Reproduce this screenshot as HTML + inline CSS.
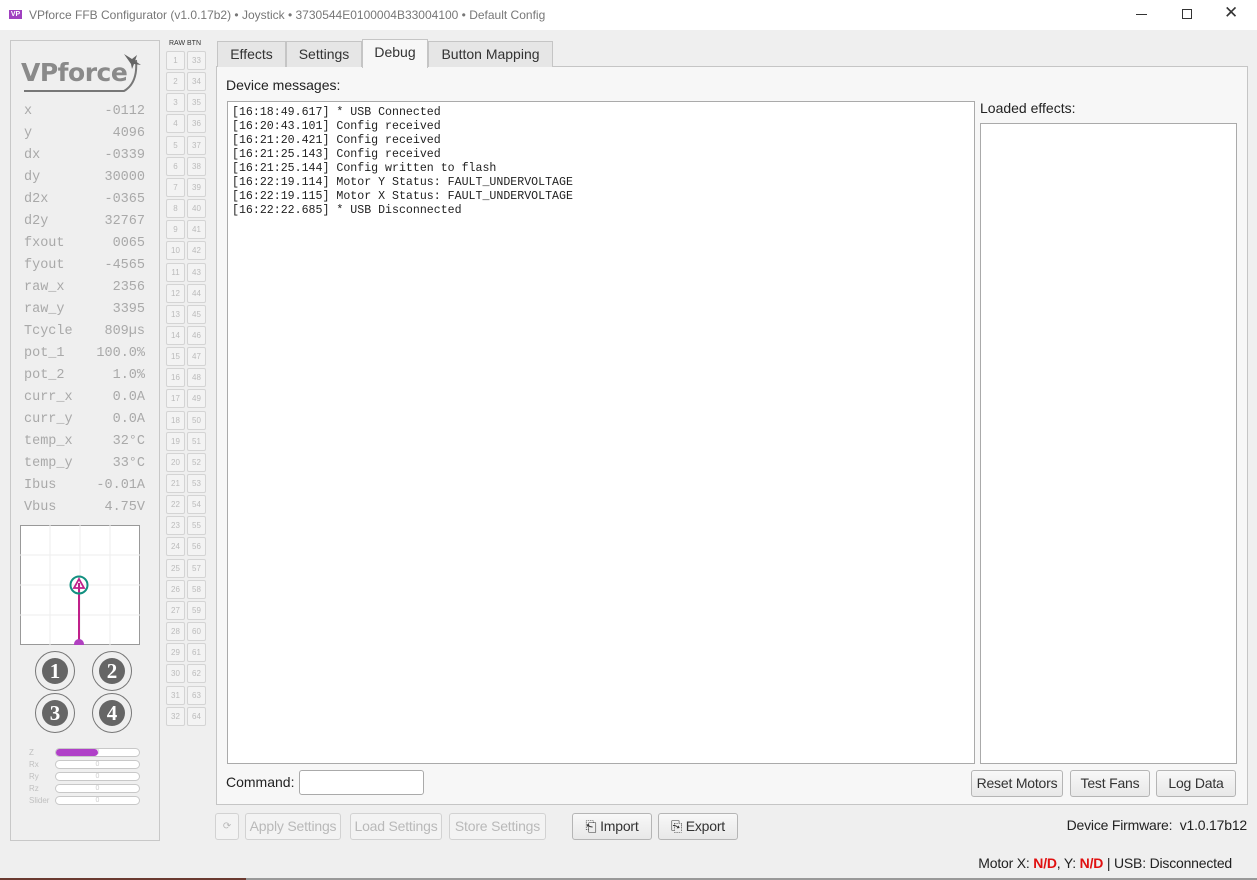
<!DOCTYPE html>
<html><head><meta charset="utf-8"><style>
*{box-sizing:border-box;margin:0;padding:0}
body{width:1257px;height:880px;background:#efefef;font-family:"Liberation Sans",sans-serif;position:relative;overflow:hidden;color:#222}
.abs{position:absolute}
.title{left:0;top:0;width:1257px;height:30px;background:#fff;font-size:12px;color:#777}
.lp{left:10px;top:40px;width:150px;height:801px;border:1px solid #c8c8c8;background:#efefef}
.v{font-family:"Liberation Mono",monospace;font-size:13.5px;color:#a9a9a9;position:absolute;left:24px;width:121px;height:22px}
.v span{float:right}
.b{position:absolute;width:19px;height:19px;border:1px solid #d4d4d4;border-radius:2px;background:#f3f3f3;font-size:8px;color:#bbb;text-align:center;line-height:18px}
.tab{position:absolute;top:41px;height:26px;border:1px solid #c5c5c5;border-bottom:none;background:#e6e6e6;font-size:14px;text-align:center;line-height:25px;color:#333}
.btn{position:absolute;height:27px;border:1px solid #b5b5b5;border-radius:3px;background:linear-gradient(#f8f8f8,#e8e8e8);font-size:14px;text-align:center;line-height:25px;color:#333;letter-spacing:-0.2px}
.dis{color:#b9b9b9;border-color:#d2d2d2;background:#f3f3f3}
.bar{position:absolute;left:55px;width:85px;height:9px;border:1px solid #c8c8c8;border-radius:5px;background:#fff;font-size:7px;color:#ccc;text-align:center;line-height:7px}
.bl{position:absolute;left:29px;font-size:8px;color:#c0c0c0}
.circ{position:absolute;width:40px;height:40px;border:1px solid #777;border-radius:50%}
.circ div{position:absolute;left:6px;top:6px;width:26px;height:26px;border-radius:50%;background:#666;color:#fff;font-weight:bold;font-family:"Liberation Serif",serif;font-size:21px;text-align:center;line-height:26px}
</style></head><body>
<div class="abs title">
 <div class="abs" style="left:9px;top:10px;width:13px;height:9px;background:#a040c0;color:#fff;font-size:7px;line-height:9px;text-align:center;font-weight:bold">VP</div>
 <div class="abs" style="left:29px;top:8px">VPforce FFB Configurator (v1.0.17b2) • Joystick • 3730544E0100004B33004100 • Default Config</div>
 <div class="abs" style="left:1136px;top:14px;width:11px;height:1px;background:#333"></div>
 <div class="abs" style="left:1182px;top:9px;width:10px;height:10px;border:1px solid #333"></div>
 <div class="abs" style="left:1224px;top:3px;font-size:17px;color:#333">✕</div>
</div>
<div class="abs lp"></div>
<div class="abs" style="left:21px;top:58px;font-size:25px;font-weight:bold;color:#8a8a8a;letter-spacing:-0.5px;font-family:'DejaVu Sans',sans-serif">VPforce</div>
<svg class="abs" style="left:20px;top:48px" width="122" height="48"><path d="M4 43 L104 43 Q118 35 116 12" fill="none" stroke="#777" stroke-width="2"/><path d="M104 6 l8 5 l5 -4 l-2 6 l6 4 l-7 -1 l-2 5 l-1 -5 z" fill="#666"/></svg>
<div class="v" style="top:104px">x<span>-0112</span></div>
<div class="v" style="top:126px">y<span>4096</span></div>
<div class="v" style="top:148px">dx<span>-0339</span></div>
<div class="v" style="top:170px">dy<span>30000</span></div>
<div class="v" style="top:192px">d2x<span>-0365</span></div>
<div class="v" style="top:214px">d2y<span>32767</span></div>
<div class="v" style="top:236px">fxout<span>0065</span></div>
<div class="v" style="top:258px">fyout<span>-4565</span></div>
<div class="v" style="top:280px">raw_x<span>2356</span></div>
<div class="v" style="top:302px">raw_y<span>3395</span></div>
<div class="v" style="top:324px">Tcycle<span>809µs</span></div>
<div class="v" style="top:346px">pot_1<span>100.0%</span></div>
<div class="v" style="top:368px">pot_2<span>1.0%</span></div>
<div class="v" style="top:390px">curr_x<span>0.0A</span></div>
<div class="v" style="top:412px">curr_y<span>0.0A</span></div>
<div class="v" style="top:434px">temp_x<span>32°C</span></div>
<div class="v" style="top:456px">temp_y<span>33°C</span></div>
<div class="v" style="top:478px">Ibus<span>-0.01A</span></div>
<div class="v" style="top:500px">Vbus<span>4.75V</span></div>
<svg class="abs" style="left:20px;top:525px" width="120" height="120"><rect x="0.5" y="0.5" width="119" height="119" fill="#fff" stroke="#999"/><g stroke="#eee"><line x1="30" y1="0" x2="30" y2="120"/><line x1="60" y1="0" x2="60" y2="120"/><line x1="90" y1="0" x2="90" y2="120"/><line x1="0" y1="30" x2="120" y2="30"/><line x1="0" y1="60" x2="120" y2="60"/><line x1="0" y1="90" x2="120" y2="90"/></g><line x1="59" y1="120" x2="59" y2="58" stroke="#c0208a" stroke-width="2"/><circle cx="59" cy="119" r="5" fill="#b040c0"/><circle cx="59" cy="60" r="8.5" fill="none" stroke="#129080" stroke-width="2"/><path d="M59 54 L64 63 L54 63 Z" fill="none" stroke="#c0208a" stroke-width="1.8"/></svg>
<div class="circ" style="left:35px;top:651px"><div>1</div></div>
<div class="circ" style="left:92px;top:651px"><div>2</div></div>
<div class="circ" style="left:35px;top:693px"><div>3</div></div>
<div class="circ" style="left:92px;top:693px"><div>4</div></div>
<div class="bl" style="top:748px">Z</div><div class="bar" style="top:748px"><div style="position:absolute;left:0;top:0;width:42px;height:7px;background:#b040c8;border-radius:4px"></div>0</div>
<div class="bl" style="top:760px">Rx</div><div class="bar" style="top:760px">0</div>
<div class="bl" style="top:772px">Ry</div><div class="bar" style="top:772px">0</div>
<div class="bl" style="top:784px">Rz</div><div class="bar" style="top:784px">0</div>
<div class="bl" style="top:796px">Slider</div><div class="bar" style="top:796px">0</div>
<div class="abs" style="left:169px;top:40px;font-size:7px;color:#333">RAW BTN</div>
<div id="g"></div>
<script>
var h='';for(var i=0;i<32;i++){var y=51+i*21.15;h+='<div class="b" style="left:166px;top:'+y+'px">'+(i+1)+'</div><div class="b" style="left:187px;top:'+y+'px">'+(i+33)+'</div>';}document.getElementById('g').innerHTML=h;
</script>
<div class="abs" style="left:216px;top:66px;width:1032px;height:739px;border:1px solid #c5c5c5;background:#f7f7f7"></div>
<div class="tab" style="left:217px;width:69px">Effects</div>
<div class="tab" style="left:286px;width:76px">Settings</div>
<div class="tab" style="left:362px;width:66px;top:39px;height:29px;background:#f7f7f7">Debug</div>
<div class="tab" style="left:428px;width:125px">Button Mapping</div>
<div class="abs" style="left:226px;top:77px;font-size:14px">Device messages:</div>
<div class="abs" style="left:227px;top:101px;width:748px;height:663px;border:1px solid #aaa;background:#fff;font-family:'Liberation Mono',monospace;font-size:11.6px;line-height:14px;padding:4px 0 0 4px;white-space:pre;color:#222">[16:18:49.617] * USB Connected
[16:20:43.101] Config received
[16:21:20.421] Config received
[16:21:25.143] Config received
[16:21:25.144] Config written to flash
[16:22:19.114] Motor Y Status: FAULT_UNDERVOLTAGE
[16:22:19.115] Motor X Status: FAULT_UNDERVOLTAGE
[16:22:22.685] * USB Disconnected</div>
<div class="abs" style="left:980px;top:100px;font-size:14px">Loaded effects:</div>
<div class="abs" style="left:980px;top:123px;width:257px;height:641px;border:1px solid #aaa;background:#fff"></div>
<div class="abs" style="left:226px;top:774px;font-size:14px">Command:</div>
<div class="abs" style="left:299px;top:770px;width:125px;height:25px;border:1px solid #aaa;border-radius:3px;background:#fff"></div>
<div class="btn" style="left:971px;top:770px;width:92px">Reset Motors</div>
<div class="btn" style="left:1070px;top:770px;width:80px">Test Fans</div>
<div class="btn" style="left:1156px;top:770px;width:80px">Log Data</div>
<div class="btn dis" style="left:215px;top:813px;width:24px;font-size:10px">⟳</div>
<div class="btn dis" style="left:245px;top:813px;width:96px">Apply Settings</div>
<div class="btn dis" style="left:350px;top:813px;width:92px">Load Settings</div>
<div class="btn dis" style="left:449px;top:813px;width:97px">Store Settings</div>
<div class="btn" style="left:572px;top:813px;width:80px">&#x2397; Import</div>
<div class="btn" style="left:658px;top:813px;width:80px">&#x2398; Export</div>
<div class="abs" style="right:10px;top:817px;font-size:14px;letter-spacing:-0.2px">Device Firmware:&nbsp; v1.0.17b12</div>
<div class="abs" style="right:25px;top:855px;font-size:14px;letter-spacing:-0.2px">Motor X: <b style="color:#e01010">N/D</b>, Y: <b style="color:#e01010">N/D</b> | USB: Disconnected</div>
<div class="abs" style="left:0;top:878px;width:246px;height:2px;background:#6a3a30"></div>
<div class="abs" style="left:246px;top:878px;width:1011px;height:2px;background:#999"></div>
</body></html>
